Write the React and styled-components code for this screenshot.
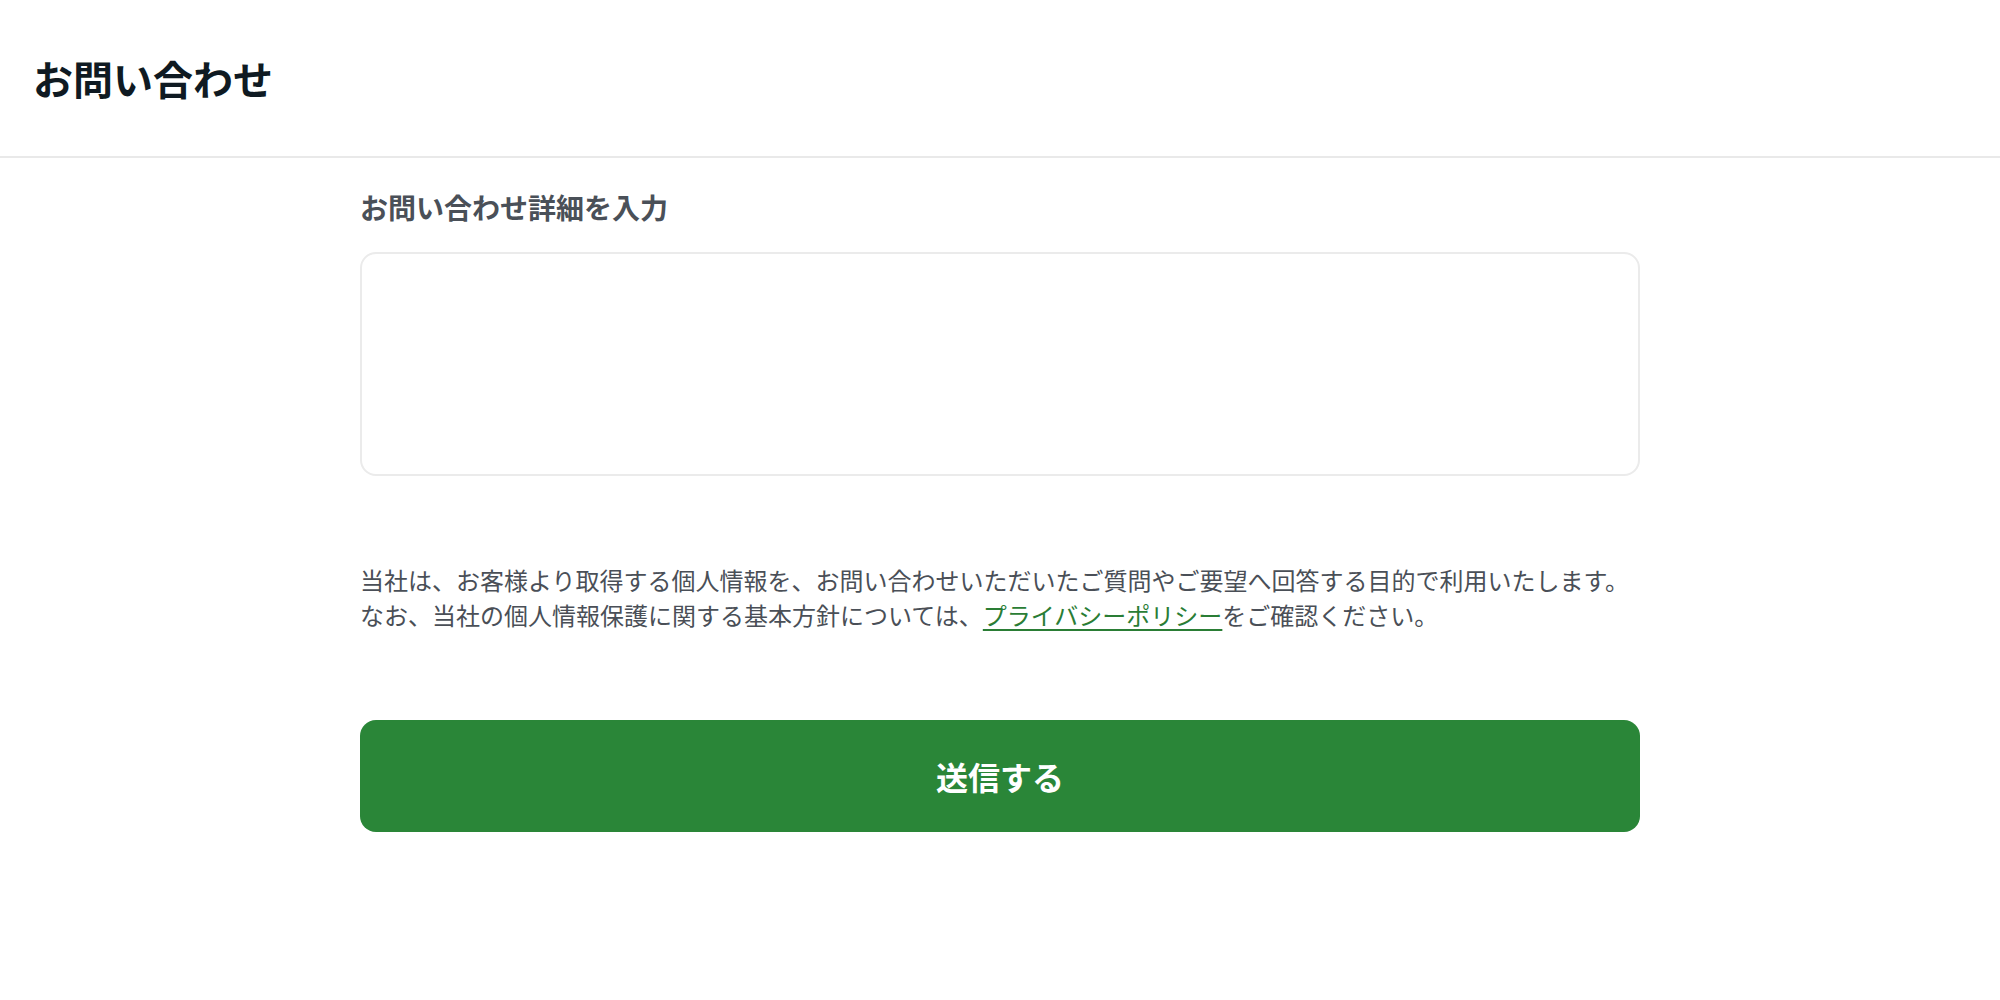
import React from 'react';
import styled, { createGlobalStyle } from 'styled-components';

const GlobalStyle = createGlobalStyle`
  body {
    margin: 0;
    background: #fff;
    font-family: "Noto Sans CJK JP", "Noto Sans", sans-serif;
  }
`;

const Header = styled.header`
  height: 156px;
  display: flex;
  align-items: center;
  padding-left: 33px;
  border-bottom: 2px solid #e9e9e9;
`;

const Title = styled.h1`
  margin: 0;
  font-size: 40px;
  font-weight: 700;
  color: #0f1a22;
`;

const Main = styled.main`
  width: 1280px;
  margin: 0 auto;
  padding-top: 28px;
`;

const Label = styled.label`
  display: block;
  font-size: 28px;
  line-height: 42px;
  font-weight: 700;
  color: #4a5058;
`;

const TextArea = styled.textarea`
  display: block;
  box-sizing: border-box;
  width: 100%;
  height: 224px;
  margin-top: 24px;
  border: 2px solid #ebebeb;
  border-radius: 16px;
  resize: none;
  outline: none;
  font: inherit;
`;

const Notice = styled.p`
  margin: 86px 0 0;
  font-size: 24px;
  line-height: 35px;
  color: #4a4f57;
`;

const Link = styled.a`
  color: #2a7d35;
  text-decoration: underline;
  text-decoration-thickness: 2px;
  text-underline-offset: 4px;
`;

const SubmitButton = styled.button`
  display: block;
  width: 100%;
  height: 112px;
  margin-top: 88px;
  border: none;
  border-radius: 16px;
  background: #2a8638;
  color: #fff;
  font-family: inherit;
  font-size: 32px;
  font-weight: 700;
  cursor: pointer;
`;

const App = () => (
  <>
    <GlobalStyle />
    <Header>
      <Title>お問い合わせ</Title>
    </Header>
    <Main>
      <Label htmlFor="detail">お問い合わせ詳細を入力</Label>
      <TextArea id="detail" />
      <Notice>
        当社は、お客様より取得する個人情報を、お問い合わせいただいたご質問やご要望へ回答する目的で利用いたします。
        <br />
        なお、当社の個人情報保護に関する基本方針については、<Link href="#">プライバシーポリシー</Link>をご確認ください。
      </Notice>
      <SubmitButton type="button">送信する</SubmitButton>
    </Main>
  </>
);

export default App;
